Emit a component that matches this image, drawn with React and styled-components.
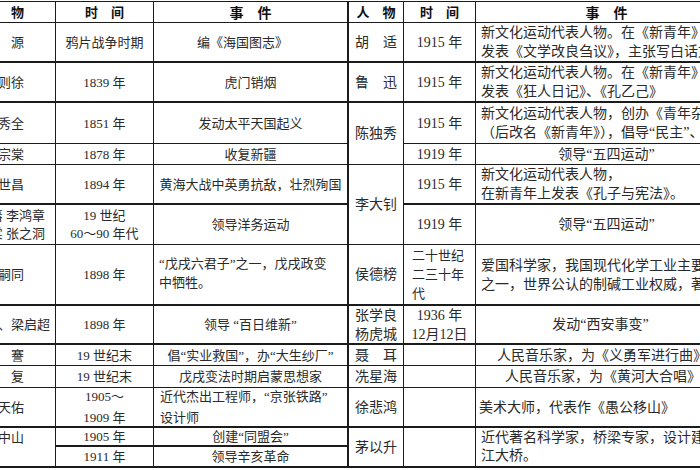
import styled, { createGlobalStyle } from "styled-components";

const GlobalStyle = createGlobalStyle`
  html, body {
    margin: 0;
    padding: 0;
    background: #fff;
    overflow: hidden;
  }
  body {
    font-family: "Liberation Serif", "Noto Sans CJK SC", serif;
    color: #2a2a2a;
  }
`;

const Sheet = styled.div`
  display: grid;
  grid-template-columns: 102px 98px 195px 55px 72px 262px;
  grid-template-rows: 21px 40px 40px 41px 21px 40px 40px 61px 39px 21px 22px 40px 19px 21px;
  width: max-content;
  margin: 1px 0 0 -46px;
  border-top: 1px solid #1b1b1b;
`;

const Cell = styled.div`
  box-sizing: border-box;
  display: flex;
  align-items: ${({ $valign }) => ($valign === "top" ? "flex-start" : "center")};
  justify-content: ${({ $align }) => ($align === "left" ? "flex-start" : "center")};
  text-align: ${({ $align }) => ($align === "left" ? "left" : "center")};
  grid-row: ${({ $span }) => ($span ? `span ${$span}` : "auto")};
  padding: ${({ $pad }) => $pad || "0"};
  border-right: ${({ $br }) => $br || 1}px solid #1b1b1b;
  border-bottom: ${({ $bb }) => $bb || 1}px solid #1b1b1b;
  font-size: ${({ $size }) => $size || 13}px;
  line-height: ${({ $lh }) => $lh || 19}px;
  white-space: nowrap;
  min-width: 0;
`;

const Head = styled(Cell)`
  font-family: "Noto Sans CJK SC", sans-serif;
  font-weight: 700;
  color: #111;
  line-height: 18px;
`;

const Text = styled.span`
  display: block;
`;

const Td = ({ children, ...props }) => (
  <Cell {...props}>
    <Text>{children}</Text>
  </Cell>
);

export default function App() {
  return (
    <>
      <GlobalStyle />
      <Sheet>
        {/* header */}
        <Head>人　物</Head>
        <Head>时　间</Head>
        <Head $size={14} $br={2}>事　件</Head>
        <Head>人　物</Head>
        <Head>时　间</Head>
        <Head $size={14}>事　件</Head>

        {/* r1 */}
        <Td $bb={2}>魏　源</Td>
        <Td $bb={2}>鸦片战争时期</Td>
        <Td $bb={2} $br={2} $pad="0 16px 0 0">编《海国图志》</Td>
        <Td $bb={2} $size={14}>胡　适</Td>
        <Td $bb={2} $size={14}>1915 年</Td>
        <Td $bb={2} $size={14} $align="left" $pad="0 0 0 5px">
          新文化运动代表人物。在《新青年》上
          <br />
          发表《文学改良刍议》，主张写白话文，
        </Td>

        {/* r2 */}
        <Td $bb={2}>林则徐</Td>
        <Td $bb={2}>1839 年</Td>
        <Td $bb={2} $br={2}>虎门销烟</Td>
        <Td $bb={2} $size={14}>鲁　迅</Td>
        <Td $bb={2} $size={14}>1915 年</Td>
        <Td $bb={2} $size={14} $align="left" $pad="0 0 0 5px">
          新文化运动代表人物。在《新青年》上
          <br />
          发表《狂人日记》、《孔乙己》
        </Td>

        {/* r3 */}
        <Td>洪秀全</Td>
        <Td>1851 年</Td>
        <Td $br={2}>发动太平天国起义</Td>
        <Td $span={2} $size={14}>陈独秀</Td>
        <Td $size={14}>1915 年</Td>
        <Td $size={14} $align="left" $pad="0 0 0 5px">
          新文化运动代表人物，创办《青年杂志》
          <br />
          （后改名《新青年》），倡导“民主”、“科学”
        </Td>

        {/* r4 */}
        <Td>左宗棠</Td>
        <Td>1878 年</Td>
        <Td $br={2}>收复新疆</Td>
        <Td $size={14}>1919 年</Td>
        <Td $size={14}>领导“五四运动”</Td>

        {/* r5 */}
        <Td $bb={2}>邓世昌</Td>
        <Td $bb={2}>1894 年</Td>
        <Td $bb={2} $br={2}>黄海大战中英勇抗敌，壮烈殉国</Td>
        <Td $span={2} $size={14}>李大钊</Td>
        <Td $bb={2} $size={14}>1915 年</Td>
        <Td $bb={2} $size={14} $align="left" $pad="0 0 0 5px">
          新文化运动代表人物，
          <br />
          在新青年上发表《孔子与宪法》。
        </Td>

        {/* r6 */}
        <Td $lh={18}>
          曾国藩 李鸿章
          <br />
          左宗棠 张之洞
        </Td>
        <Td $lh={18}>
          19 世纪
          <br />
          60～90 年代
        </Td>
        <Td $br={2}>领导洋务运动</Td>
        <Td $size={14}>1919 年</Td>
        <Td $size={14}>领导“五四运动”</Td>

        {/* r7 */}
        <Td $bb={2}>谭嗣同</Td>
        <Td $bb={2}>1898 年</Td>
        <Td $bb={2} $br={2} $align="left" $pad="0 0 4px 5px">
          “戊戌六君子”之一，戊戌政变
          <br />
          中牺牲。
        </Td>
        <Td $bb={2} $size={14}>侯德榜</Td>
        <Td $bb={2} $size={13} $align="left" $pad="0 0 0 8px">
          二十世纪
          <br />
          二三十年
          <br />
          代
        </Td>
        <Td $bb={2} $size={14} $align="left" $pad="0 0 0 5px">
          爱国科学家，我国现代化学工业主要奠基人
          <br />
          之一，世界公认的制碱工业权威，著《制碱》
        </Td>

        {/* r8 */}
        <Td $bb={2}>康有为、梁启超</Td>
        <Td $bb={2}>1898 年</Td>
        <Td $bb={2} $br={2}>领导 “百日维新”</Td>
        <Td $bb={2} $size={14} $lh={19}>
          张学良
          <br />
          杨虎城
        </Td>
        <Td $bb={2} $size={14} $lh={19}>
          1936 年
          <br />
          12月12日
        </Td>
        <Td $bb={2} $size={14} $pad="0 12px 0 0">发动“西安事变”</Td>

        {/* r9 */}
        <Td>张　謇</Td>
        <Td>19 世纪末</Td>
        <Td $br={2}>倡“实业救国”，办“大生纱厂”</Td>
        <Td $size={14}>聂　耳</Td>
        <Td $size={14} />
        <Td $size={14} $align="left" $pad="0 0 0 21px">
          人民音乐家，为《义勇军进行曲》作曲
        </Td>

        {/* r10 */}
        <Td>严　复</Td>
        <Td>19 世纪末</Td>
        <Td $br={2}>戊戌变法时期启蒙思想家</Td>
        <Td $size={14}>冼星海</Td>
        <Td $size={14} />
        <Td $size={14} $align="left" $pad="0 0 0 29px">
          人民音乐家，为《黄河大合唱》作曲
        </Td>

        {/* r11 */}
        <Td $bb={2}>詹天佑</Td>
        <Td $bb={2} $lh={21}>
          1905～
          <br />
          1909 年
        </Td>
        <Td $bb={2} $br={2} $align="left" $pad="0 0 0 6px" $lh={21}>
          近代杰出工程师，“京张铁路”
          <br />
          设计师
        </Td>
        <Td $bb={2} $size={14}>徐悲鸿</Td>
        <Td $bb={2} $size={14} />
        <Td $bb={2} $size={14} $align="left" $pad="0 0 0 3px">
          美术大师，代表作《愚公移山》
        </Td>

        {/* r12 + r13 */}
        <Td $span={2} $bb={2} $valign="top" $pad="0">
          孙中山
        </Td>
        <Td $bb={2}>1905 年</Td>
        <Td $bb={2} $br={2}>创建“同盟会”</Td>
        <Td $span={2} $bb={2} $size={14}>茅以升</Td>
        <Td $span={2} $bb={2} $size={14} />
        <Td $span={2} $bb={2} $size={14} $lh={18} $align="left" $pad="0 0 0 5px">
          近代著名科学家，桥梁专家，设计建造钱塘
          <br />
          江大桥。
        </Td>
        <Td $bb={2}>1911 年</Td>
        <Td $bb={2} $br={2}>领导辛亥革命</Td>
      </Sheet>
    </>
  );
}
